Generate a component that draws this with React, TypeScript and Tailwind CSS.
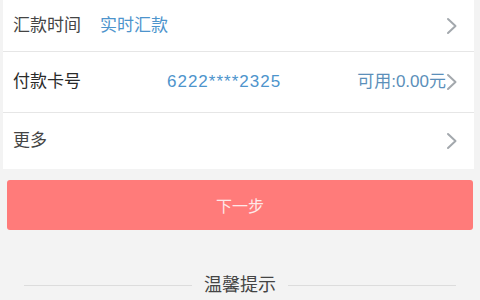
function Chevron() {
  return (
    <svg width="12" height="18" viewBox="0 0 12 18" className="shrink-0">
      <path d="M2 2l7.5 7L2 16" fill="none" stroke="#a3a8ad" strokeWidth="2" strokeLinecap="round" strokeLinejoin="round" />
    </svg>
  )
}

export default function App() {
  return (
    <div
      className="w-[480px] h-[300px] overflow-hidden bg-[#f3f3f3] text-[#444]"
      style={{ fontFamily: '"Liberation Sans", "Noto Sans CJK SC", sans-serif' }}
    >
      <div className="mx-[3px] mr-[6px] bg-white">
        <div className="flex h-[52px] items-center pl-[10px] pr-[16px] border-b border-[#e6e6e6]">
          <span className="text-[17px] w-[87px]">汇款时间</span>
          <span className="text-[17px] text-[#4d94cc]">实时汇款</span>
          <span className="ml-auto"><Chevron /></span>
        </div>
        <div className="flex h-[61px] items-center pl-[10px] pr-[16px] border-b border-[#e6e6e6]">
          <span className="text-[17px] text-[#2a2a2a] w-[154px]">付款卡号</span>
          <span className="text-[17px] tracking-[1px] text-[#4d94cc]">6222****2325</span>
          <span className="ml-auto text-[17px] text-[#5b8fba]">可用:0.00元</span>
          <Chevron />
        </div>
        <div className="flex h-[56px] items-center pl-[10px] pr-[16px]">
          <span className="text-[17px]">更多</span>
          <span className="ml-auto"><Chevron /></span>
        </div>
      </div>

      <div className="px-[7px] pt-[11px]">
        <button className="w-full h-[50px] rounded-[3px] bg-[#ff7b7a] pt-[3px] text-[16px] text-[#fde8e8]">
          下一步
        </button>
      </div>

      <div className="flex items-center gap-[12px] px-[24px] pt-[42px]">
        <div className="flex-1 h-px bg-[#dcdcdc]" />
        <span className="text-[18px] text-[#444]">温馨提示</span>
        <div className="flex-1 h-px bg-[#dcdcdc]" />
      </div>
    </div>
  )
}
